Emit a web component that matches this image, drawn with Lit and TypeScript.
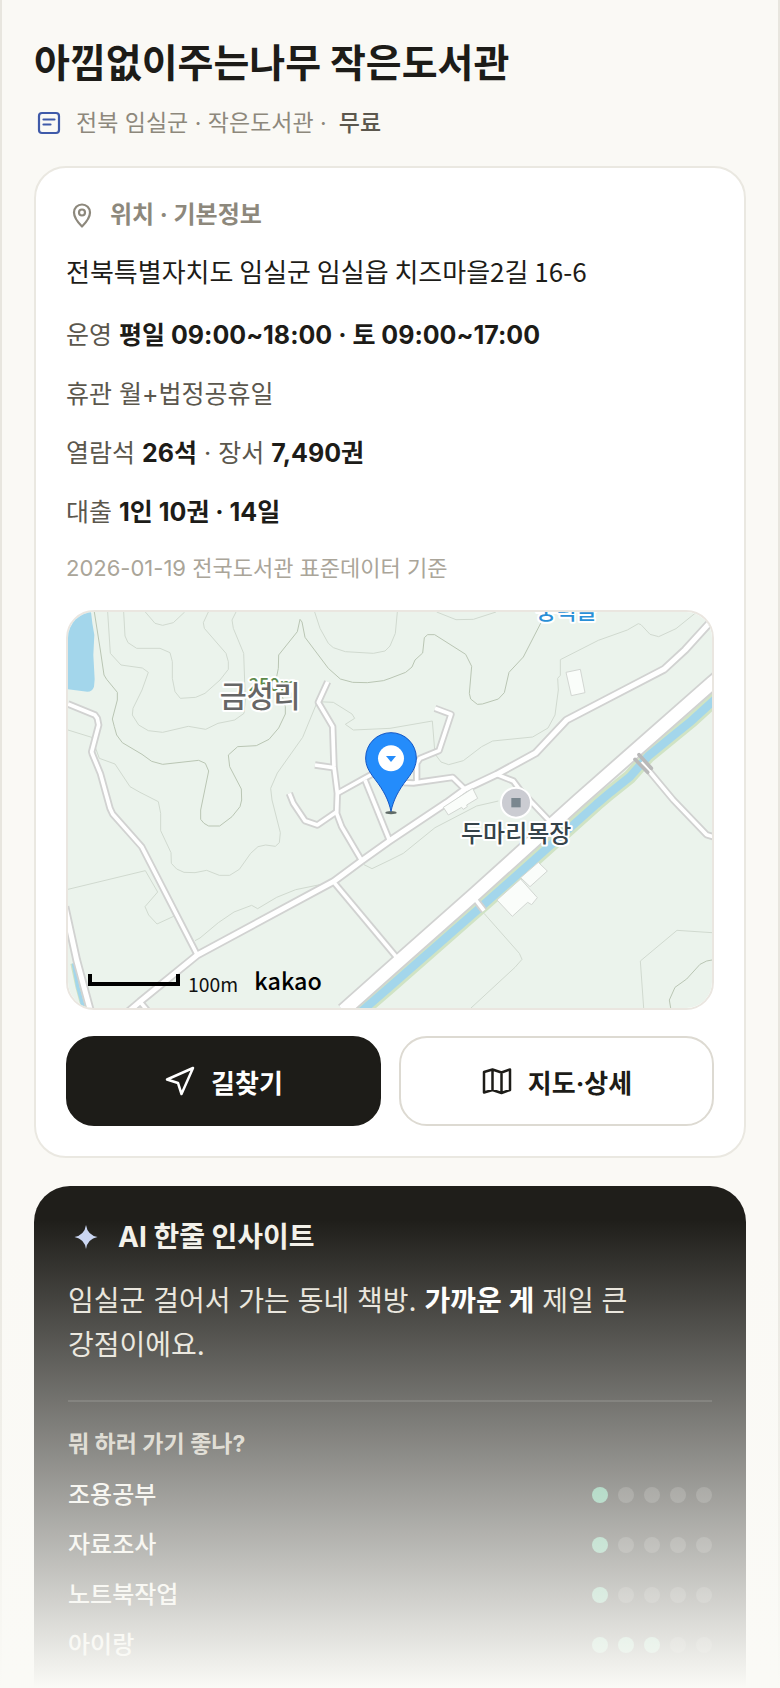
import { LitElement, html, svg, css } from "lit";
import { customElement } from "lit/decorators.js";

interface Purpose {
  name: string;
  score: number;
}

const PURPOSES: Purpose[] = [
  { name: "조용공부", score: 1 },
  { name: "자료조사", score: 1 },
  { name: "노트북작업", score: 1 },
  { name: "아이랑", score: 3 },
];

const CONTOURS = [
  "M143 36L151 160L183 195L247 204L265 217L246 270L219 325L217 345L236 375L265 392L308 397L385 379L437 388L474 370L524 360L552 340L556 300L551 160L520 85L516 60L528 36",
  "M191 36L195 108L204 128L230 145H300L330 158L337 185V235L345 275L361 295L407 292L435 280L480 240L505 208V185L498 160L433 85L430 68L445 36",
  "M256 36L285 70L308 76L340 68L374 36",
  "M764 36L780 85L805 130L820 143L856 155L940 160L975 153L990 138L1006 100L1012 36",
  "M1130 36L1188 59L1240 58L1308 36",
  "M1910 36L1848 86L1796 110L1770 103L1743 74L1735 71L1702 90L1615 121L1501 179V226L1493 235L1495 270L1485 345L1464 384L1418 411L1298 423L1265 440L1210 482L1166 494L1143 486L1125 462L1117 363L990 385L880 390L856 373L884 355L876 342L820 307L772 305L728 412L652 519L632 565L636 600L661 698L658 728L646 739L617 735L594 740L572 760L538 808L509 826H478L440 811L405 818L372 817L350 807L334 790L333 758L302 692V640L295 605L240 577L210 560L165 492L118 475L95 412L24 390",
  "M24 868L256 812L293 876L255 920L266 945L291 972L343 948",
  "M405 1022L420 1014L475 968L522 936L575 916L593 926L650 892L707 869L780 854",
  "M912 794L936 806L990 780L1030 760L1125 683L1250 618L1315 603",
  "M1272 940L1378 1060L1386 1078L1365 1102L1233 1224",
  "M1956 998L1851 991L1741 1083L1751 1224",
];

const INDEX_CONTOURS = [
  "M103 36L121 150L132 225L140 238L172 277V300L157 357L163 380L170 405L187 428L246 463L275 484L308 493L416 481L436 490L446 513L422 630V658L432 670L446 678H479L516 650L540 620L545 600L544 567L509 500L505 465L533 440L589 437L627 418L656 384L676 342V320L650 230L655 205L656 165L712 95L720 58L726 66L735 112L805 205L841 237L878 247L922 248L970 242L990 235L1037 217L1056 201L1065 180L1088 159L1093 113L1103 104H1124L1217 163L1235 199L1228 280L1232 297L1252 313L1267 312L1315 297L1333 278L1347 217L1390 171L1444 66",
  "M1956 1080L1940 1083L1920 1093L1880 1137L1845 1162L1828 1200L1832 1224",
];

const LANES = [
  "M24 312L105 345L112 355L116 375L95 455L97 462L121 520L150 625L158 642L245 740L412 1065",
  "M803 245L775 307L818 380L822 500L832 580L830 640L845 680L905 782",
  "M765 495L820 503",
  "M832 580L915 534L975 502",
  "M915 540L988 720",
  "M1125 325L1173 343L1137 452L1080 475L1070 490V545",
  "M1030 548L1060 549L1178 532L1215 568",
  "M688 580L700 610L735 662L772 675L830 635",
  "M1310 523L1360 543L1380 570L1420 612L1475 670",
  "M820 845L1010 1072",
  "M240 1205L265 1235",
  "M1745 486L1840 600L1940 704L1966 712",
  "M1245 897L1272 932",
];

const STREETS = [
  "M205 1235L240 1205L412 1065L820 845L905 782L985 725L1160 608L1215 568L1310 523L1427 459L1520 360L1812 208L1875 150L1966 50",
  "M15 920L50 1080L92 1235",
];

const HIGHWAY = "M1990 220L1956 249L1555 602L1250 877L1005 1094L850 1232";
const RIVER =
  "M1990 276L1956 306L1895 362L1830 415L1765 468L1710 530L1650 578L1610 612L1430 773L1275 910L990 1160L900 1238";

const path = (d: string) => svg`<path d=${d} />`;

@customElement("area-map")
export class AreaMap extends LitElement {
  static styles = css`
    :host {
      display: block;
    }
    svg {
      display: block;
      width: 100%;
      height: 100%;
      font-family: "Noto Sans CJK KR", sans-serif;
    }
    .line {
      fill: none;
      stroke-linejoin: round;
    }
    .contour {
      stroke: #d0d9cf;
      stroke-width: 3;
    }
    .index {
      stroke: #b9c5b3;
      stroke-width: 3;
    }
    .casing {
      stroke: #d1d2d1;
    }
    .fill {
      stroke: #ffffff;
    }
    .bank {
      stroke: #d0e3c4;
      stroke-width: 42;
    }
    .water {
      stroke: #a3d6eb;
      stroke-width: 25;
    }
    .building {
      fill: #fafdfa;
      stroke: #d2d6d2;
      stroke-width: 3;
    }
    .label {
      stroke: #ffffff;
      stroke-width: 12;
      stroke-linejoin: round;
      paint-order: stroke;
      font-weight: 500;
    }
    .village {
      fill: #666666;
      font-size: 88px;
    }
    .height {
      fill: #5c8a4a;
      font-size: 54px;
    }
    .poi {
      fill: #364349;
      font-size: 72px;
    }
    .stop {
      fill: #2a8fd6;
      font-size: 66px;
    }
    .scale {
      fill: #111111;
      font-size: 58px;
    }
    .brand {
      fill: #000000;
      font-size: 70px;
      font-weight: 500;
    }
  `;

  render() {
    return html`
      <svg
        viewBox="24 36 1932 1188"
        preserveAspectRatio="xMidYMid slice"
        role="img"
        aria-label="금성리 주변 지도"
      >
        <rect x="-2000" y="-2000" width="6000" height="6000" fill="#ebf3ec" />
        <path
          fill="#a3d6eb"
          d="M24 36H93L97 70L103 105L100 165L104 238L102 260Q97 275 82 275L24 268Z"
        />
        <g class="line contour">${CONTOURS.map(path)}</g>
        <g class="line index">${INDEX_CONTOURS.map(path)}</g>
        <g class="line">
          <path class="bank" d=${RIVER} />
          <path class="water" d=${RIVER} />
          <path d="M40 1090L55 1160L74 1230" stroke="#d0e3c4" stroke-width="18" />
          <path d="M40 1090L53 1160L72 1230" stroke="#a3d6eb" stroke-width="10" />
        </g>
        <g class="building">
          <path d="M1518 217L1561 208L1575 278L1534 287Z" />
          <path d="M1435 787L1462 813L1410 860L1382 833Z" />
          <path d="M1382 837L1432 893L1415 914L1403 907L1357 949L1311 900Z" />
        </g>
        <g class="line casing">
          <g stroke-width="22">${LANES.map(path)}</g>
          <g stroke-width="26">${STREETS.map(path)}</g>
          <path d=${HIGHWAY} stroke-width="48" />
        </g>
        <g class="line fill">
          <g stroke-width="11">${LANES.map(path)}</g>
          <g stroke-width="15">${STREETS.map(path)}</g>
          <path d=${HIGHWAY} stroke-width="37" />
        </g>
        <path
          class="building"
          d="M1150 622L1238 565L1253 595L1220 615L1222 620L1210 628L1205 622L1165 645Z"
        />
        <path
          d="M1725 478L1763 517M1737 464L1774 505"
          stroke="#b9b9b9"
          stroke-width="11"
          stroke-linecap="round"
        />
        <text class="label height" x="566" y="274">250m</text>
        <text class="label village" x="479" y="320">금성리</text>
        <text class="label stop" x="1428" y="56">중턱골</text>
        <circle cx="1368" cy="608" r="45" fill="#cbccd2" stroke="#fff" stroke-width="6" />
        <rect x="1354" y="594" width="28" height="28" fill="#7a878f" />
        <text class="label poi" x="1203" y="727">두마리목장</text>
        <ellipse cx="993" cy="638" rx="17" ry="5" fill="#5f6a66" />
        <path
          d="M993 634C986 600 970 570 945 538C925 512 917 496 917 474A76 76 0 0 1 1069 474C1069 496 1061 512 1041 538C1016 570 1000 600 993 634Z"
          fill="#248cfb"
          stroke="#1557c4"
          stroke-width="3"
        />
        <circle cx="993" cy="475" r="39" fill="#fff" />
        <path d="M978 468H1008L993 486Z" fill="#248cfb" />
        <path d="M90 1122V1152H354V1122" fill="none" stroke="#000" stroke-width="12" />
        <text class="scale" x="384" y="1176">100m</text>
        <text class="brand" x="583" y="1170">kakao</text>
      </svg>
    `;
  }
}

@customElement("score-dots")
export class ScoreDots extends LitElement {
  static properties = { score: { type: Number } };
  declare score: number;

  static styles = css`
    :host {
      display: flex;
      gap: 10px;
    }
    .dot {
      width: 16px;
      height: 16px;
      border-radius: 50%;
      background: rgba(255, 255, 255, 0.16);
    }
    .on {
      background: #5cb38d;
    }
  `;

  render() {
    return [1, 2, 3, 4, 5].map(
      (n) => html`<span class="dot ${n <= this.score ? "on" : ""}"></span>`
    );
  }
}

@customElement("app-root")
export class AppRoot extends LitElement {
  static styles = css`
    :host {
      display: block;
      box-sizing: border-box;
      background: #faf9f5;
      color: #1d1c18;
      font-family: Inter, "Noto Sans CJK KR", sans-serif;
      font-size: 24px;
      word-break: keep-all;
    }
    * {
      box-sizing: border-box;
      margin: 0;
    }
    svg {
      flex: none;
      fill: none;
      stroke: currentColor;
      stroke-width: 2.2;
      stroke-linecap: round;
      stroke-linejoin: round;
    }
    .frame {
      position: relative;
      border: solid #e8e6df;
      border-width: 0 2px;
      padding: 32px 32px 0;
    }
    h1 {
      font-family: "Noto Sans CJK KR", sans-serif;
      font-size: 39px;
      line-height: 56px;
      font-weight: 700;
    }
    .meta {
      display: flex;
      align-items: center;
      gap: 12px;
      padding: 17px 0 25px;
      font-size: 23px;
      line-height: 36px;
      color: #8d887c;
    }
    .meta svg {
      color: #3f5aa9;
      margin: 0 1px;
    }
    .meta b {
      color: #5b574d;
      font-weight: 500;
    }
    .card {
      border: 2px solid #eae8e1;
      border-radius: 32px;
      background: #ffffff;
      padding: 30px;
    }
    h2 {
      display: flex;
      align-items: center;
      gap: 14px;
      line-height: 34px;
    }
    .card h2 {
      font-size: 24px;
      font-weight: 700;
      color: #8d887c;
    }
    .address {
      padding: 19px 0 26px;
      font-family: "Noto Sans CJK KR", sans-serif;
      font-size: 26px;
      line-height: 40px;
    }
    .facts {
      display: grid;
      gap: 23px;
      font-size: 25px;
      line-height: 36px;
      color: #5b574d;
    }
    .facts b {
      color: #1d1c18;
      font-weight: 700;
    }
    .source {
      padding: 20px 0 24px;
      font-size: 22px;
      line-height: 36px;
      color: #aaa599;
    }
    area-map {
      height: 400px;
      border: 2px solid #eae6e0;
      border-radius: 28px;
      overflow: hidden;
    }
    .actions {
      display: grid;
      grid-template-columns: 1fr 1fr;
      gap: 18px;
      padding-top: 26px;
    }
    .action {
      display: flex;
      align-items: center;
      justify-content: center;
      gap: 15px;
      height: 90px;
      border: 2px solid #dddad2;
      border-radius: 28px;
      background: #ffffff;
      color: #1d1c18;
      font: inherit;
      font-size: 26px;
      font-weight: 700;
      text-decoration: none;
    }
    .action svg {
      stroke-width: 2.5;
    }
    .primary {
      border-color: #1d1c18;
      background: #1d1c18;
      color: #ffffff;
    }
    .teaser {
      max-height: 530px;
      padding-top: 28px;
      overflow: hidden;
    }
    .insight {
      border-radius: 36px;
      background: #1f1e1a;
      color: #f3f1ea;
      padding: 34px 34px 60px;
    }
    .insight h2 {
      gap: 16px;
      font-size: 28px;
      font-weight: 700;
    }
    .insight .spark {
      color: #c9d5f2;
      fill: currentColor;
      stroke: none;
    }
    .lead {
      padding: 25px 0 33px;
      border-bottom: 2px solid rgba(255, 255, 255, 0.12);
      font-size: 28px;
      line-height: 44px;
      color: #e6e2d8;
    }
    .lead b {
      color: #ffffff;
      font-weight: 700;
    }
    h3 {
      padding: 26px 0 10px;
      font-size: 23px;
      line-height: 32px;
      font-weight: 700;
      color: #c9c4b8;
    }
    .purposes {
      list-style: none;
      padding: 0;
    }
    .purpose {
      display: flex;
      align-items: center;
      justify-content: space-between;
      line-height: 50px;
      font-weight: 500;
    }
    .fade {
      position: absolute;
      inset: auto -2px 0;
      height: 468px;
      background: linear-gradient(rgba(250, 250, 246, 0), #fafaf6);
      pointer-events: none;
    }
  `;

  render() {
    return html`
      <main class="frame">
        <h1>아낌없이주는나무 작은도서관</h1>
        <p class="meta">
          <svg width="28" height="28" viewBox="0 0 28 28">
            <rect x="4" y="4" width="20" height="20" rx="3" />
            <path d="M8.500 10.500H19.500M8.500 15.500H15.500" />
          </svg>
          <span>전북 임실군 · 작은도서관 ·</span>
          <b>무료</b>
        </p>

        <section class="card">
          <h2>
            <svg width="30" height="30" viewBox="0 0 30 30">
              <path d="M16 26.500C12 22.500 8 18 8 12.500A8 8 0 0 1 24 12.500C24 18 20 22.500 16 26.500Z" />
              <circle cx="16" cy="12.500" r="3" />
            </svg>
            위치 · 기본정보
          </h2>
          <p class="address">전북특별자치도 임실군 임실읍 치즈마을2길 16-6</p>
          <div class="facts">
            <p>운영 <b>평일 09:00~18:00 · 토 09:00~17:00</b></p>
            <p>휴관 월+법정공휴일</p>
            <p>열람석 <b>26석</b> · 장서 <b>7,490권</b></p>
            <p>대출 <b>1인 10권 · 14일</b></p>
          </div>
          <p class="source">2026-01-19 전국도서관 표준데이터 기준</p>
          <area-map></area-map>
          <div class="actions">
            <a class="action primary" href="#route">
              <svg width="32" height="32" viewBox="0 0 32 32">
                <path d="M29 3L3 14.500L14 18L17.500 29Z" />
              </svg>
              길찾기
            </a>
            <a class="action" href="#detail">
              <svg width="32" height="32" viewBox="0 0 32 32">
                <path d="M3 7L11.500 4.500L20.500 7.500L29 4.500V25L20.500 28L11.500 25L3 27.500ZM11.500 4.500V25M20.500 7.500V28" />
              </svg>
              지도·상세
            </a>
          </div>
        </section>

        <div class="teaser">
          <section class="insight">
            <h2>
              <svg class="spark" width="34" height="34" viewBox="0 0 34 34">
                <path d="M18 5Q19.500 15 29.500 17Q19.500 19 18 29Q16.500 19 6.500 17Q16.500 15 18 5Z" />
              </svg>
              AI 한줄 인사이트
            </h2>
            <p class="lead">임실군 걸어서 가는 동네 책방. <b>가까운 게</b> 제일 큰 강점이에요.</p>
            <h3>뭐 하러 가기 좋나?</h3>
            <ul class="purposes">
              ${PURPOSES.map(
                (p) => html`
                  <li class="purpose">
                    ${p.name}<score-dots
                      .score=${p.score}
                      role="img"
                      aria-label="5점 중 ${p.score}점"
                    ></score-dots>
                  </li>
                `
              )}
            </ul>
          </section>
        </div>
        <div class="fade"></div>
      </main>
    `;
  }
}
